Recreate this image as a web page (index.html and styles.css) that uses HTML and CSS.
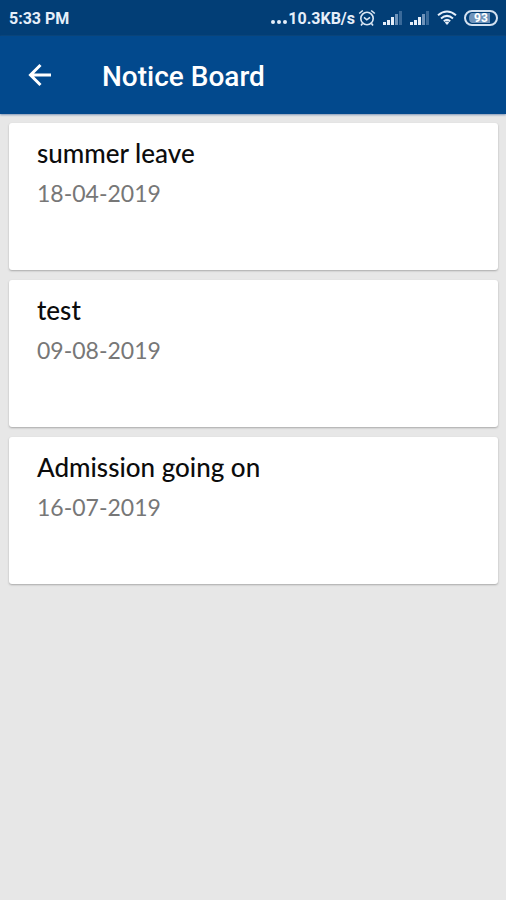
FILE: index.html
```html
<!DOCTYPE html>
<html lang="en">
<head>
  <meta charset="utf-8">
  <meta name="viewport" content="width=device-width, initial-scale=1">
  <title>Notice Board</title>
  <link rel="stylesheet" href="styles.css">
</head>
<body>
  <div class="status-bar">
    <span class="clock">5:33 PM</span>
    <div class="status-items">
      <svg class="dots" width="18" height="18" viewBox="0 0 18 18" aria-hidden="true">
        <circle cx="4" cy="13" r="2"/><circle cx="10" cy="13" r="2"/><circle cx="16" cy="13" r="2"/>
      </svg>
      <span class="speed">10.3KB/s</span>
      <svg class="alarm" width="18" height="18" viewBox="0 0 18 18" aria-hidden="true">
        <circle cx="9" cy="9.5" r="6.2"/>
        <path d="M1.2 4.5 4.8 1.5M16.8 4.5 13.2 1.5M4.5 14.5 3 16.5M13.5 14.5 15 16.5M6 8.3 8.8 10.8 12 8.3"/>
      </svg>
      <svg class="signal" width="20" height="16" viewBox="0 0 20 16" aria-hidden="true">
        <path d="M0 12h3v3H0zM4 10h3v5H4zM8 7h3v8H8z"/>
        <path class="weak" d="M12 4h3v11h-3z"/>
        <path class="weaker" d="M16 1h3v14h-3z"/>
      </svg>
      <svg class="signal" width="20" height="16" viewBox="0 0 20 16" aria-hidden="true">
        <path d="M0 12h3v3H0zM4 10h3v5H4zM8 7h3v8H8z"/>
        <path class="weak" d="M12 4h3v11h-3z"/>
        <path class="weaker" d="M16 1h3v14h-3z"/>
      </svg>
      <svg class="wifi" width="20" height="16" viewBox="0 0 20 16" aria-hidden="true">
        <path d="M1 5.2Q10-2.2 19 5.2M4 8.4Q10 3.4 16 8.4M6.8 11.2Q10 8.6 13.2 11.2"/>
        <path class="tip" d="M7.8 12.4Q10 10.8 12.2 12.4L10 15z"/>
      </svg>
      <span class="battery">93</span>
    </div>
  </div>
  <header class="app-bar">
    <button class="back" type="button" aria-label="Back">
      <svg width="24" height="24" viewBox="0 0 24 24" aria-hidden="true">
        <path d="M23 12H2.5M12.5 2 2.5 12 12.5 22"/>
      </svg>
    </button>
    <h1>Notice Board</h1>
  </header>
  <main class="notices">
    <article class="card">
      <h2>summer leave</h2>
      <time datetime="2019-04-18">18-04-2019</time>
    </article>
    <article class="card">
      <h2>test</h2>
      <time datetime="2019-08-09">09-08-2019</time>
    </article>
    <article class="card">
      <h2>Admission going on</h2>
      <time datetime="2019-07-16">16-07-2019</time>
    </article>
  </main>
</body>
</html>
```
FILE: styles.css
```css
* {
  box-sizing: border-box;
}

body {
  margin: 0;
  min-height: 100vh;
  background: #e7e7e7;
  font-family: Roboto, sans-serif;
}

.status-bar {
  display: flex;
  align-items: center;
  justify-content: space-between;
  height: 36px;
  padding: 0 8px 0 9px;
  background: #023e76;
  color: #e6effa;
  font-size: 16px;
  font-weight: 700;
}

.status-items {
  display: flex;
  align-items: center;
}

.dots {
  margin-right: 1px;
  fill: #e6effa;
}

.alarm {
  margin: 0 7px 0 3px;
  fill: none;
  stroke: #dce8f5;
  stroke-width: 1.6;
}

.signal {
  margin-right: 7px;
  fill: #e6effa;
}

.signal .weak {
  fill: #6f93ba;
}

.signal .weaker {
  fill: #3a6a9a;
}

.wifi {
  margin-right: 7px;
  fill: none;
  stroke: #e6effa;
  stroke-width: 2;
}

.wifi .tip {
  fill: #e6effa;
  stroke: none;
}

.battery {
  width: 34px;
  height: 16px;
  border: 2px solid #d4e1f0;
  border-radius: 8px;
  background: linear-gradient(90deg, #6f93ba 88%, #023e76 88%) content-box;
  padding: 1px 3px;
  color: #ffffff;
  font-size: 12px;
  line-height: 11px;
  text-align: center;
}

.app-bar {
  display: flex;
  align-items: center;
  height: 78px;
  padding: 3px 16px 0;
  background: #02498d;
  box-shadow: 0 1px 2px #8095b5;
  color: #ffffff;
}

.back {
  display: flex;
  align-items: center;
  justify-content: center;
  width: 48px;
  height: 48px;
  margin-right: 38px;
  padding: 0 0 4px;
  border: 0;
  background: none;
  color: inherit;
}

.back svg {
  fill: none;
  stroke: currentColor;
  stroke-width: 3;
}

h1 {
  margin: 0;
  font-size: 28px;
  font-weight: 500;
  line-height: 36px;
}

.notices {
  display: flex;
  flex-direction: column;
  gap: 10px;
  padding: 9px 8px 9px 9px;
}

.card {
  min-height: 147px;
  padding: 14px 28px;
  border-radius: 3px;
  background: #ffffff;
  box-shadow: 0 1px 2px #a8a8a8;
  font-family: Lato, sans-serif;
}

h2 {
  margin: 0 0 8px;
  color: #0c0c0c;
  font-size: 26px;
  font-weight: 500;
  line-height: 32px;
}

time {
  display: block;
  color: #777777;
  font-size: 23px;
  line-height: 32px;
}
```
